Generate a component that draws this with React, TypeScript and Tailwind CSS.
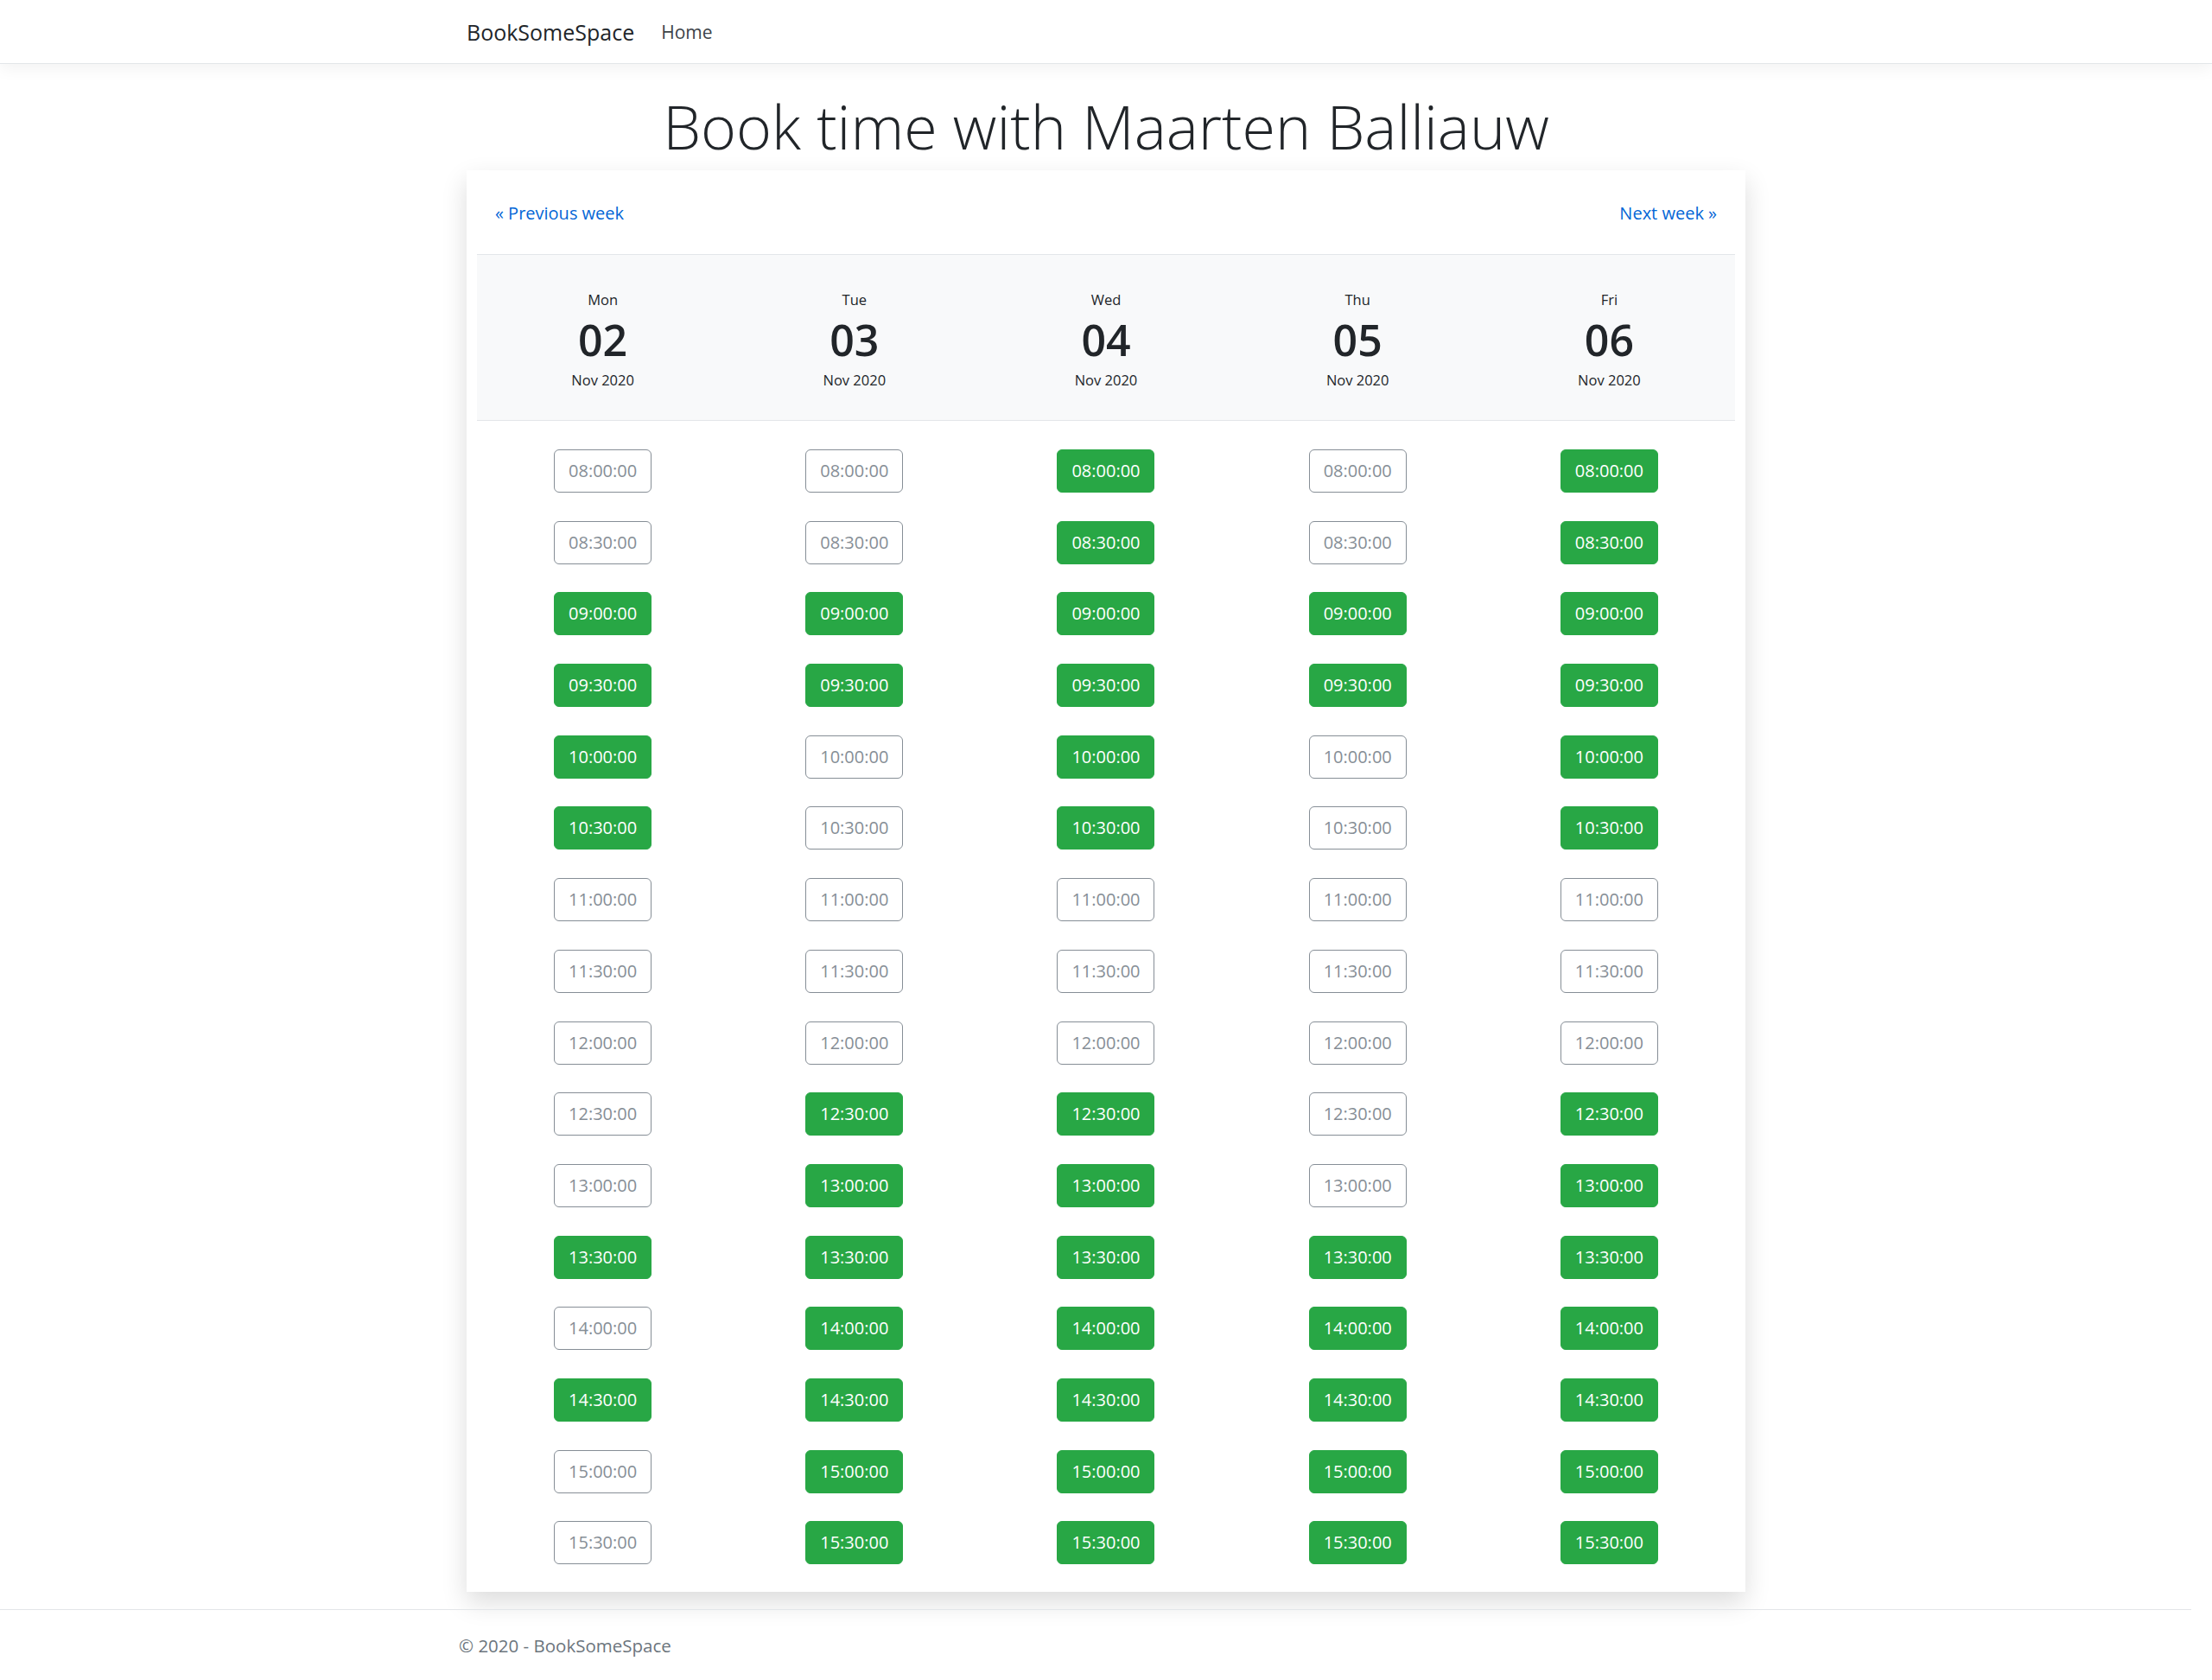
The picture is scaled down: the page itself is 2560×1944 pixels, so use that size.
const days = [
    { name: 'Mon', day: '02' },
    { name: 'Tue', day: '03' },
    { name: 'Wed', day: '04' },
    { name: 'Thu', day: '05' },
    { name: 'Fri', day: '06' },
]

const times = [
    '08:00:00', '08:30:00', '09:00:00', '09:30:00', '10:00:00', '10:30:00', '11:00:00', '11:30:00',
    '12:00:00', '12:30:00', '13:00:00', '13:30:00', '14:00:00', '14:30:00', '15:00:00', '15:30:00',
]

// one string per day, one char per slot: 1 = free (green), 0 = taken
const free = [
    '0011110000010100',
    '0011000001111111',
    '1111110001111111',
    '0011000000011111',
    '1111110001111111',
]

function Slot({ time, open }: { time: string; open: boolean }) {
    return open ? (
        <button className="w-[113px] h-[50px] rounded-[6px] bg-[#28a745] border-[1.5px] border-[#28a745] text-white text-[20px]">
            {time}
        </button>
    ) : (
        <button className="w-[113px] h-[50px] rounded-[6px] bg-white border-[1.5px] border-[#868e96] text-[#868e96] text-[20px]">
            {time}
        </button>
    )
}

export default function App() {
    return (
        <div className="min-h-[1944px] bg-white text-[#212529]" style={{ fontFamily: '"Open Sans", "Noto Sans", sans-serif' }}>
            {/* Navbar */}
            <nav className="h-[74px] border-b-[1.5px] border-[#e3e6e9] bg-white shadow-[0_6px_18px_rgba(0,0,0,0.05)]">
                <div className="w-[1480px] mx-auto h-full pt-[2px] flex items-center gap-[31px]">
                    <span className="text-[25px] text-[#212529]">BookSomeSpace</span>
                    <span className="text-[21px] text-[#3d4348]">Home</span>
                </div>
            </nav>

            <main className="w-[1480px] mx-auto">
                <h1 className="mt-[21px] text-center text-[70px] leading-[102px] font-light text-[#212529]">
                    Book time with Maarten Balliauw
                </h1>

                <div className="bg-white px-[12px] shadow-[0_12px_28px_rgba(0,0,0,0.14)]">
                    <div className="h-[97px] pt-[3px] px-[21px] flex items-center justify-between text-[20px] text-[#0366d6]">
                        <a href="#">« Previous week</a>
                        <a href="#">Next week »</a>
                    </div>

                    <div className="grid grid-cols-5 h-[193px] bg-[#f8f9fa] border-y-[1.5px] border-[#e3e6e9]">
                        {days.map((d) => (
                            <div key={d.day} className="flex flex-col items-center pt-[38px]">
                                <div className="text-[16.5px] leading-[28px]">{d.name}</div>
                                <div className="text-[50px] leading-[64px] font-semibold">{d.day}</div>
                                <div className="text-[16.5px] leading-[30px]">Nov 2020</div>
                            </div>
                        ))}
                    </div>

                    <div className="grid grid-cols-5 pt-[33px] pb-[32px]">
                        {days.map((d, di) => (
                            <div key={d.day} className="flex flex-col items-center gap-[32.7px]">
                                {times.map((t, ti) => (
                                    <Slot key={t} time={t} open={free[di][ti] === '1'} />
                                ))}
                            </div>
                        ))}
                    </div>
                </div>
            </main>

            {/* Footer */}
            <footer className="mt-[20px] mr-[24px] border-t-[1.5px] border-[#e3e6e9]">
                <div className="w-[1474px] mx-auto h-[82px] flex items-center text-[20.5px] text-[#6c757d]">
                    © 2020 - BookSomeSpace
                </div>
            </footer>
        </div>
    )
}
